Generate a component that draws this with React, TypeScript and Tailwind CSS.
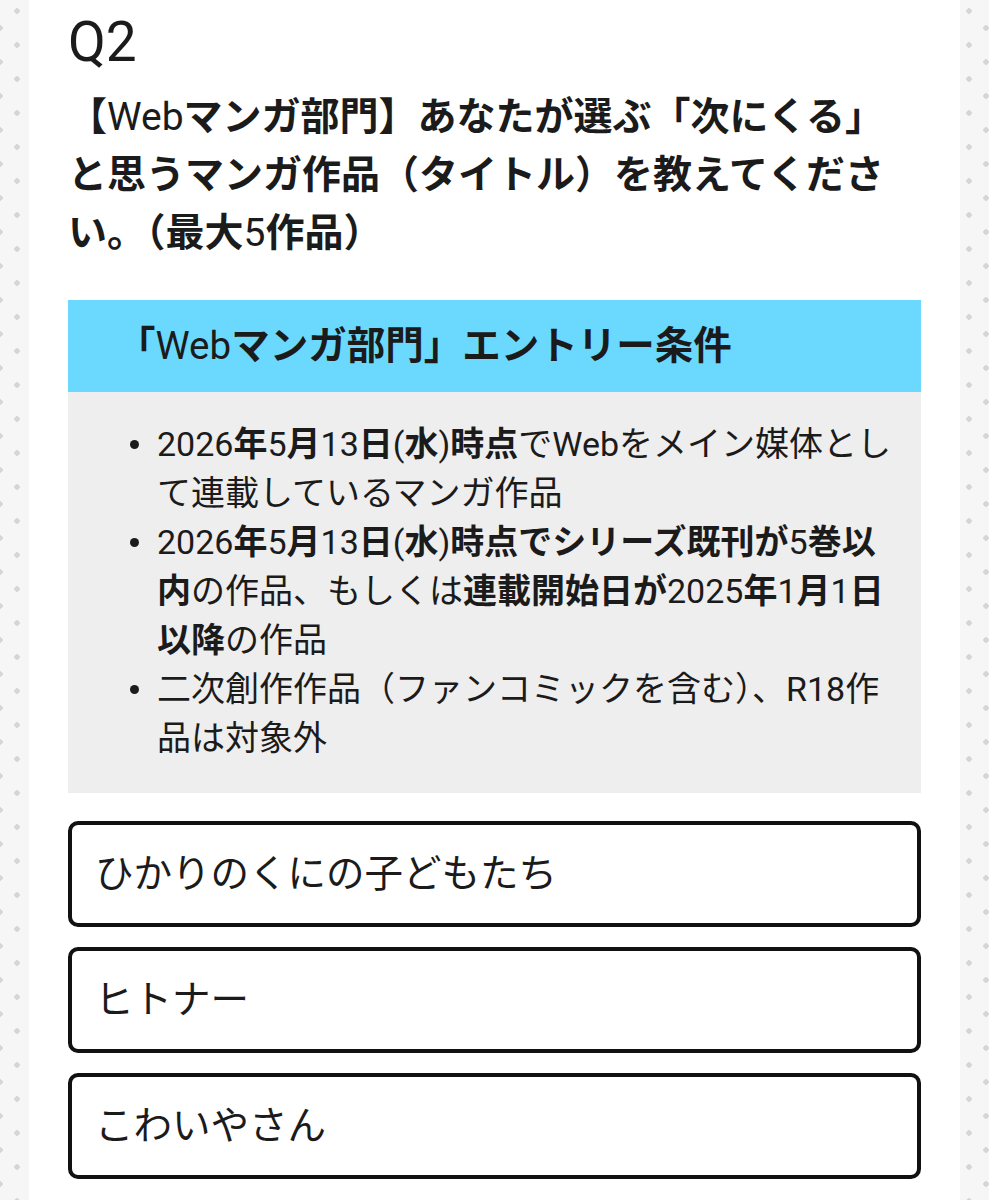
const FONT = "font-['Roboto','Noto_Sans_CJK_JP',sans-serif]";

function N({ children }: { children: React.ReactNode }) {
  // latin glyphs in the bold runs render at regular weight in the original
  return <span className="font-normal">{children}</span>;
}

function Bullet({ children }: { children: React.ReactNode }) {
  return (
    <li className="flex">
      <span className="flex h-[49px] w-[27px] shrink-0 items-center">
        <span className="h-[9px] w-[9px] rounded-full bg-[#1b1b1b]" />
      </span>
      <span className="min-w-0 flex-1">{children}</span>
    </li>
  );
}

const answers = ["ひかりのくにの子どもたち", "ヒトナー", "こわいやさん"];

export default function App() {
  return (
    <div
      className={`min-h-screen bg-[#f6f6f6] [background-image:radial-gradient(circle,#d6d6d6_2.5px,transparent_3px),radial-gradient(circle,#d6d6d6_2.5px,transparent_3px)] [background-size:34px_34px] [background-position:0_-6px,-17px_11px] ${FONT} text-[#1b1b1b]`}
    >
      <main className="mx-auto w-[931px] bg-white px-[39px] pt-[12px] pb-10">
        <h2 className="text-[55px] leading-[60px] font-normal">Q2</h2>
        <p className="mt-[16px] text-[39px] leading-[58px] font-bold">
          【<N>Web</N>マンガ部門】あなたが選ぶ「次にくる」と思うマンガ作品（タイトル）を教えてください。（最大<N>5</N>作品）
        </p>

        <section className="mt-[38px]">
          <div className="flex h-[92px] items-center bg-[#6ad9fd] pl-[49px] text-[38.5px] font-bold">
            「<N>Web</N>マンガ部門」エントリー条件
          </div>
          <ul className="bg-[#eeeeee] pt-[28px] pr-[22px] pb-[30px] pl-[62px] text-[34px] leading-[49px]">
            <Bullet>
              <b>
                <N>2026</N>年<N>5</N>月<N>13</N>日<N>(</N>水<N>)</N>時点
              </b>
              でWebをメイン媒体として連載しているマンガ作品
            </Bullet>
            <Bullet>
              <b>
                <N>2026</N>年<N>5</N>月<N>13</N>日<N>(</N>水<N>)</N>時点でシリーズ既刊が<N>5</N>巻以内
              </b>
              の作品、もしくは
              <b>
                連載開始日が<N>2025</N>年<N>1</N>月<N>1</N>日以降
              </b>
              の作品
            </Bullet>
            <Bullet>二次創作作品（ファンコミックを含む）、R18作品は対象外</Bullet>
          </ul>
        </section>

        <div className="mt-[28px] flex flex-col gap-5">
          {answers.map((a) => (
            <div
              key={a}
              className="flex h-[106px] items-center rounded-[10px] border-4 border-[#111111] px-[23px] text-[38.5px]"
            >
              {a}
            </div>
          ))}
        </div>
      </main>
    </div>
  );
}
